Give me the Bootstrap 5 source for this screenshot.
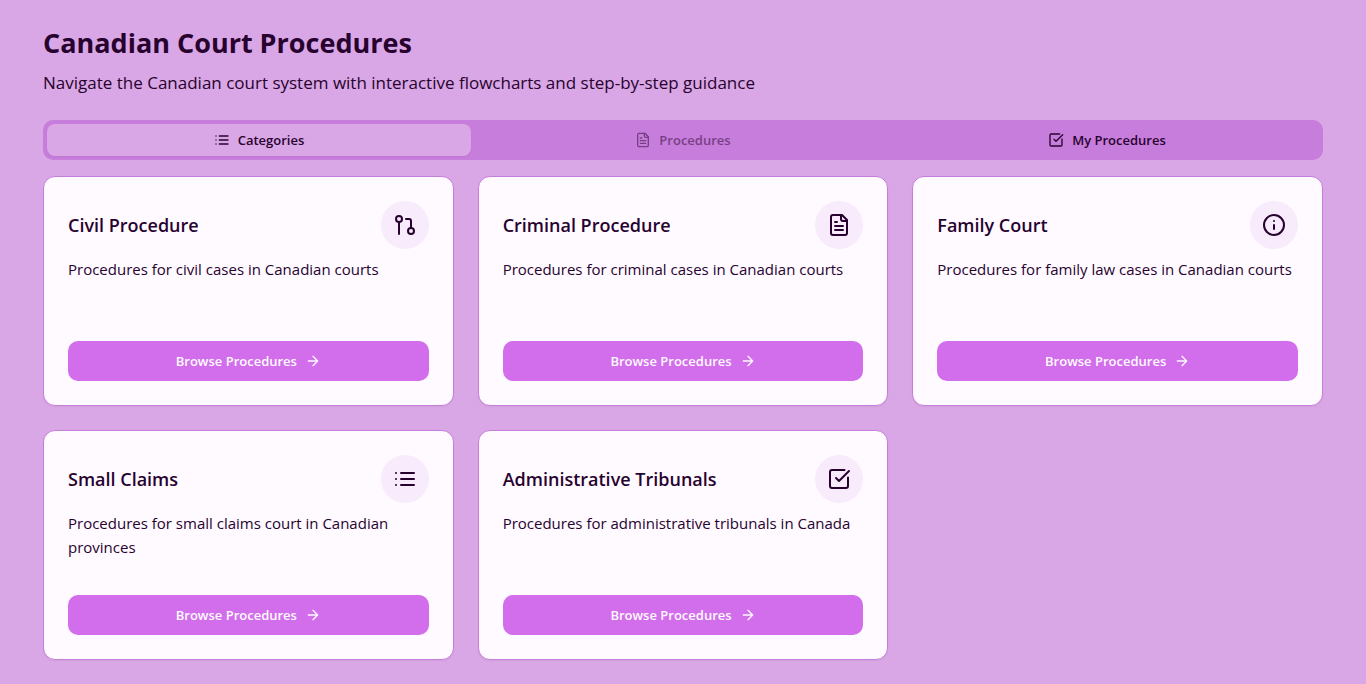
<!DOCTYPE html>
<html lang="en">
<head>
<meta charset="utf-8">
<meta name="viewport" content="width=device-width, initial-scale=1">
<title>Canadian Court Procedures</title>
<link href="https://cdn.jsdelivr.net/npm/bootstrap@5.3.0/dist/css/bootstrap.min.css" rel="stylesheet">
<style>
  body { background: #d9a7e5; color: #28022f; font-family: "Segoe UI", "Open Sans", "Noto Sans", sans-serif; }
  .page { max-width: 1328px; }
  .page-title { font-size: 27px; line-height: 38px; font-weight: 700; }
  .page-lead { font-size: 17px; line-height: 26px; }
  .icon-set { display: none; }
  .glyph { width: 16px; height: 16px; flex: none; fill: none; stroke: currentColor; stroke-width: 2; stroke-linecap: round; stroke-linejoin: round; }
  .glyph-lg { width: 24px; height: 24px; }
  .tab-strip { background: #c77ddb; border-radius: 10px; }
  .tab-strip .nav-link { background: transparent; border: 0; color: inherit; font-size: 13px; line-height: 20px; font-weight: 600; border-radius: 8px; padding: 6px 12px; }
  .tab-strip .nav-link.active { background: #d9a7e5; color: inherit; box-shadow: 0 1px 2px rgba(0, 0, 0, .05); }
  .tab-strip .nav-link:disabled { opacity: .5; }
  .court-card { --bs-card-bg: #fefaff; --bs-card-color: #28022f; --bs-card-border-color: #c77ddb; --bs-card-border-radius: 12px; box-shadow: 0 1px 2px rgba(0, 0, 0, .05); }
  .court-title { font-size: 18px; line-height: 24px; font-weight: 600; }
  .court-icon { width: 48px; height: 48px; background: #f8ebfc; }
  .court-text { font-size: 15px; line-height: 24px; min-height: 48px; margin-bottom: 36px; }
  .btn-browse { --bs-btn-bg: #d26eec; --bs-btn-color: #fefaff; --bs-btn-hover-bg: #c75fe3; --bs-btn-hover-color: #fefaff; --bs-btn-active-bg: #bb52d8; --bs-btn-active-color: #fefaff; --bs-btn-border-width: 0; --bs-btn-border-radius: 10px; font-size: 13px; line-height: 20px; font-weight: 600; padding: 10px 16px; }
</style>
</head>
<body>
<svg class="icon-set" aria-hidden="true">
  <symbol id="i-list" viewBox="0 0 24 24"><path d="M3 6h.01M3 12h.01M3 18h.01M8 6h13M8 12h13M8 18h13"/></symbol>
  <symbol id="i-file" viewBox="0 0 24 24"><path d="M15 2H6a2 2 0 0 0-2 2v16a2 2 0 0 0 2 2h12a2 2 0 0 0 2-2V7Z"/><path d="M14 2v4a2 2 0 0 0 2 2h4M10 9H8M16 13H8M16 17H8"/></symbol>
  <symbol id="i-check" viewBox="0 0 24 24"><path d="M21 10.5V19a2 2 0 0 1-2 2H5a2 2 0 0 1-2-2V5a2 2 0 0 1 2-2h12.5"/><path d="m9 11 3 3L22 4"/></symbol>
  <symbol id="i-branch" viewBox="0 0 24 24"><circle cx="18" cy="18" r="3"/><circle cx="6" cy="6" r="3"/><path d="M13 6h3a2 2 0 0 1 2 2v7M6 9v12"/></symbol>
  <symbol id="i-info" viewBox="0 0 24 24"><circle cx="12" cy="12" r="10"/><path d="M12 16v-4M12 8h.01"/></symbol>
  <symbol id="i-arrow" viewBox="0 0 24 24"><path d="M5 12h14M12 5l7 7-7 7"/></symbol>
</svg>
<main class="page container-fluid p-4">
  <header class="mb-4">
    <h1 class="page-title mb-2">Canadian Court Procedures</h1>
    <p class="page-lead mb-0">Navigate the Canadian court system with interactive flowcharts and step-by-step guidance</p>
  </header>
  <div class="tab-strip nav nav-justified p-1 mb-3" role="tablist">
    <button class="nav-link active d-flex align-items-center justify-content-center gap-2" type="button" role="tab" aria-selected="true"><svg class="glyph" aria-hidden="true"><use href="#i-list"/></svg>Categories</button>
    <button class="nav-link d-flex align-items-center justify-content-center gap-2" type="button" role="tab" disabled><svg class="glyph" aria-hidden="true"><use href="#i-file"/></svg>Procedures</button>
    <button class="nav-link d-flex align-items-center justify-content-center gap-2" type="button" role="tab" aria-selected="false"><svg class="glyph" aria-hidden="true"><use href="#i-check"/></svg>My Procedures</button>
  </div>
  <div class="row row-cols-1 row-cols-md-2 row-cols-lg-3 g-4">
    <div class="col">
      <article class="card court-card h-100"><div class="card-body p-4 d-flex flex-column">
        <div class="d-flex align-items-center justify-content-between mb-2"><h2 class="court-title mb-0">Civil Procedure</h2><span class="court-icon rounded-circle d-flex align-items-center justify-content-center"><svg class="glyph glyph-lg" aria-hidden="true"><use href="#i-branch"/></svg></span></div>
        <p class="court-text">Procedures for civil cases in Canadian courts</p>
        <button class="btn btn-browse w-100 mt-auto d-flex align-items-center justify-content-center gap-2" type="button">Browse Procedures<svg class="glyph" aria-hidden="true"><use href="#i-arrow"/></svg></button>
      </div></article>
    </div>
    <div class="col">
      <article class="card court-card h-100"><div class="card-body p-4 d-flex flex-column">
        <div class="d-flex align-items-center justify-content-between mb-2"><h2 class="court-title mb-0">Criminal Procedure</h2><span class="court-icon rounded-circle d-flex align-items-center justify-content-center"><svg class="glyph glyph-lg" aria-hidden="true"><use href="#i-file"/></svg></span></div>
        <p class="court-text">Procedures for criminal cases in Canadian courts</p>
        <button class="btn btn-browse w-100 mt-auto d-flex align-items-center justify-content-center gap-2" type="button">Browse Procedures<svg class="glyph" aria-hidden="true"><use href="#i-arrow"/></svg></button>
      </div></article>
    </div>
    <div class="col">
      <article class="card court-card h-100"><div class="card-body p-4 d-flex flex-column">
        <div class="d-flex align-items-center justify-content-between mb-2"><h2 class="court-title mb-0">Family Court</h2><span class="court-icon rounded-circle d-flex align-items-center justify-content-center"><svg class="glyph glyph-lg" aria-hidden="true"><use href="#i-info"/></svg></span></div>
        <p class="court-text">Procedures for family law cases in Canadian courts</p>
        <button class="btn btn-browse w-100 mt-auto d-flex align-items-center justify-content-center gap-2" type="button">Browse Procedures<svg class="glyph" aria-hidden="true"><use href="#i-arrow"/></svg></button>
      </div></article>
    </div>
    <div class="col">
      <article class="card court-card h-100"><div class="card-body p-4 d-flex flex-column">
        <div class="d-flex align-items-center justify-content-between mb-2"><h2 class="court-title mb-0">Small Claims</h2><span class="court-icon rounded-circle d-flex align-items-center justify-content-center"><svg class="glyph glyph-lg" aria-hidden="true"><use href="#i-list"/></svg></span></div>
        <p class="court-text">Procedures for small claims court in Canadian provinces</p>
        <button class="btn btn-browse w-100 mt-auto d-flex align-items-center justify-content-center gap-2" type="button">Browse Procedures<svg class="glyph" aria-hidden="true"><use href="#i-arrow"/></svg></button>
      </div></article>
    </div>
    <div class="col">
      <article class="card court-card h-100"><div class="card-body p-4 d-flex flex-column">
        <div class="d-flex align-items-center justify-content-between mb-2"><h2 class="court-title mb-0">Administrative Tribunals</h2><span class="court-icon rounded-circle d-flex align-items-center justify-content-center"><svg class="glyph glyph-lg" aria-hidden="true"><use href="#i-check"/></svg></span></div>
        <p class="court-text">Procedures for administrative tribunals in Canada</p>
        <button class="btn btn-browse w-100 mt-auto d-flex align-items-center justify-content-center gap-2" type="button">Browse Procedures<svg class="glyph" aria-hidden="true"><use href="#i-arrow"/></svg></button>
      </div></article>
    </div>
  </div>
</main>
<script src="https://cdn.jsdelivr.net/npm/bootstrap@5.3.0/dist/js/bootstrap.bundle.min.js"></script>
</body>
</html>
